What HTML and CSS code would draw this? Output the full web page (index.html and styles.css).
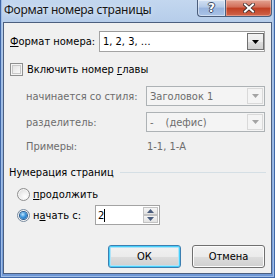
FILE: index.html
```html
<!DOCTYPE html>
<html lang="ru">
<head>
<meta charset="utf-8">
<title>Формат номера страницы</title>
<link rel="stylesheet" href="styles.css">
</head>
<body>
<div class="window">
  <div class="titlebar">
    <div class="title">Формат номера страницы</div>
    <div class="caption">
      <div class="cap-btn help"><span class="qmark">?</span></div>
      <div class="cap-btn close">
        <svg width="12" height="10" viewBox="0 0 12 10"><path d="M2 1.5 L10 8.5 M10 1.5 L2 8.5" stroke="#3b2a2a" stroke-width="3.6" stroke-linecap="square" fill="none"/><path d="M2 1.5 L10 8.5 M10 1.5 L2 8.5" stroke="#ffffff" stroke-width="2" stroke-linecap="square" fill="none"/></svg>
      </div>
    </div>
  </div>
  <div class="client">
    <div class="row row-format">
      <span class="lbl-format"><u>Ф</u>ормат номера:</span>
      <div class="combo combo-format">
        <span class="combo-text">1, 2, 3, …</span>
        <span class="drop drop-active"><svg width="7" height="4" viewBox="0 0 7 4"><path d="M0 0 H7 L3.5 4 Z" fill="#000"/></svg></span>
      </div>
    </div>
    <div class="row row-check">
      <span class="checkbox"></span>
      <span class="check-label">Включить номер <u>г</u>лавы</span>
    </div>
    <div class="row row-sub row-sub1">
      <span class="sub-label">начинается со стиля:</span>
      <div class="combo combo-dis">
        <span class="combo-text">Заголовок 1</span>
        <span class="drop drop-dis"><svg width="7" height="4" viewBox="0 0 7 4"><path d="M0 0 H7 L3.5 4 Z" fill="#a3a3a3"/></svg></span>
      </div>
    </div>
    <div class="row row-sub row-sub2">
      <span class="sub-label">разделитель:</span>
      <div class="combo combo-dis">
        <span class="combo-text">-<span class="dash-gap">(дефис)</span></span>
        <span class="drop drop-dis"><svg width="7" height="4" viewBox="0 0 7 4"><path d="M0 0 H7 L3.5 4 Z" fill="#a3a3a3"/></svg></span>
      </div>
    </div>
    <div class="row row-examples">
      <span class="sub-label">Примеры:</span>
      <span class="examples-value">1-1, 1-А</span>
    </div>
    <div class="row row-group">
      <span class="group-title">Нумерация страниц</span>
      <span class="group-line"></span>
    </div>
    <div class="row row-radio1">
      <span class="radio"></span>
      <span class="radio-label"><u>п</u>родолжить</span>
    </div>
    <div class="row row-radio2">
      <span class="radio radio-on"><span class="radio-dot"></span></span>
      <span class="radio-label radio-label-start">н<u>а</u>чать с:</span>
      <div class="spin">
        <span class="spin-text">2<span class="caret"></span></span>
        <span class="spin-btns">
          <span class="spin-btn"><svg width="7" height="4" viewBox="0 0 7 4"><path d="M0 4 H7 L3.5 0 Z" fill="#4a5d7e"/></svg></span>
          <span class="spin-btn"><svg width="7" height="4" viewBox="0 0 7 4"><path d="M0 0 H7 L3.5 4 Z" fill="#4a5d7e"/></svg></span>
        </span>
      </div>
    </div>
    <div class="row row-buttons">
      <div class="btn btn-default">ОК</div>
      <div class="btn">Отмена</div>
    </div>
  </div>
</div>
</body>
</html>
```
FILE: styles.css
```css
html, body {
  margin: 0;
  padding: 0;
}

body {
  width: 275px;
  height: 278px;
  overflow: hidden;
  font-family: "DejaVu Sans Condensed", "DejaVu Sans", sans-serif;
  font-size: 11px;
  color: #000;
}

.window {
  box-sizing: border-box;
  width: 275px;
  height: 278px;
  display: flex;
  flex-direction: column;
  padding: 0 3px 4px 3px;
  background: linear-gradient(to bottom, #c3d7ef 0px, #b6cdea 22px, #8fb0e0 60%, #6f98d6 100%);
  box-shadow: inset 1px 0 0 #3f67a8, inset -1px 0 0 #3f67a8, inset 0 -1px 0 #3f67a8, inset 2px 0 0 #9fbde6, inset -2px 0 0 #9fbde6, inset 0 -2px 0 #9fbde6;
}

.titlebar {
  height: 22px;
  display: flex;
  flex-shrink: 0;
}

.title {
  flex: 1;
  font-family: "Noto Sans", "Open Sans", sans-serif;
  font-size: 12px;
  letter-spacing: -0.25px;
  line-height: 20px;
  padding-left: 1px;
  color: #151515;
  text-shadow: 0 0 6px rgba(255, 255, 255, 0.8);
}

.caption {
  display: flex;
  height: 17px;
}

.cap-btn {
  box-sizing: border-box;
  height: 17px;
  border: 1px solid #4b5e7c;
  border-top: none;
  display: flex;
  align-items: center;
  justify-content: center;
}

.help {
  width: 28px;
  border-right: none;
  border-radius: 0 0 0 4px;
  background: linear-gradient(to bottom, #d3e1f3 0%, #b3c9e7 45%, #98b4de 50%, #a9c2e6 100%);
  box-shadow: inset 0 0 0 1px rgba(255, 255, 255, 0.45);
}

.qmark {
  font-family: "DejaVu Sans", sans-serif;
  font-weight: bold;
  font-size: 12px;
  line-height: 12px;
  color: #fff;
  text-shadow: 1px 0 0 #3a4a63, -1px 0 0 #3a4a63, 0 1px 0 #3a4a63, 0 -1px 0 #3a4a63;
}

.close {
  width: 47px;
  border-radius: 0 0 4px 0;
  background: linear-gradient(to bottom, #e3a393 0%, #d26d58 45%, #c03e22 50%, #d0654c 100%);
  box-shadow: inset 0 0 0 1px rgba(255, 220, 210, 0.4);
}

.close svg {
  display: block;
}

.client {
  flex: 1;
  background: #f0f0f0;
  border: 1px solid #4c5f7f;
  display: flex;
  flex-direction: column;
  padding-top: 8px;
}

.row {
  display: flex;
  align-items: center;
  flex-shrink: 0;
}

u {
  text-decoration: underline;
  text-underline-offset: 1px;
}

/* Format row */
.row-format {
  height: 21px;
}

.lbl-format {
  margin-left: 6px;
  width: 89px;
}

.combo {
  box-sizing: border-box;
  display: flex;
  align-items: center;
  height: 100%;
  border: 1px solid #a5a5a5;
  background: #fff;
}

.combo-format {
  width: 166px;
  border-color: #a3a3a3;
  border-top-color: #9b9b9b;
}

.combo-text {
  flex: 1;
  padding-left: 3px;
  white-space: nowrap;
}

.drop {
  box-sizing: border-box;
  width: 17px;
  align-self: stretch;
  display: flex;
  align-items: center;
  justify-content: center;
}

.drop-active {
  margin: 1px 0 1px 0;
  border: 1px solid #707070;
  background: linear-gradient(to bottom, #f2f2f2 0%, #ebebeb 50%, #dddddd 51%, #cfcfcf 100%);
}

.drop-dis {
  margin: 1px 1px 1px 0;
  width: 16px;
  border: 1px solid #d9d9d9;
  background: #f4f4f4;
}

/* Checkbox */
.row-check {
  margin-top: 11px;
  height: 13px;
}

.checkbox {
  box-sizing: border-box;
  width: 13px;
  height: 13px;
  margin-left: 6px;
  border: 1px solid #8e8f8f;
  background: linear-gradient(135deg, #dcdcdc 0%, #f2f2f2 60%, #ffffff 100%);
  box-shadow: inset 0 0 0 1px #f4f4f4, inset 0 0 0 2px #c8c8c8;
}

.check-label {
  margin-left: 4px;
}

/* Sub rows (disabled) */
.row-sub {
  height: 20px;
}

.row-sub1 {
  margin-top: 10px;
}

.row-sub2 {
  margin-top: 6px;
}

.sub-label {
  margin-left: 22px;
  width: 120px;
  color: #6d6d6d;
}

.combo-dis {
  width: 119px;
  border-color: #adb2b5;
  background: #f4f4f4;
  color: #6d6d6d;
}

.dash-gap {
  margin-left: 12px;
}

.row-examples {
  margin-top: 7px;
  height: 14px;
}

.examples-value {
  color: #6d6d6d;
  padding-left: 1px;
}

/* Group */
.row-group {
  margin-top: 12px;
  height: 14px;
}

.group-title {
  margin-left: 5px;
}

.group-line {
  flex: 1;
  height: 1px;
  background: #d5dfe5;
  margin-left: 6px;
  margin-right: 5px;
}

/* Radios */
.row-radio1 {
  margin-top: 8px;
  height: 14px;
}

.row-radio2 {
  margin-top: 4px;
  height: 20px;
}

.radio {
  box-sizing: border-box;
  width: 13px;
  height: 13px;
  margin-left: 13px;
  border-radius: 50%;
  border: 1px solid #8f8f8f;
  background: radial-gradient(circle at 65% 70%, #ffffff 0%, #f0f0f0 40%, #d4d4d4 100%);
  box-shadow: inset 0 0 0 1px #f6f6f6;
  display: flex;
  align-items: center;
  justify-content: center;
}

.radio-on {
  border-color: #7a8ca0;
}

.radio-dot {
  width: 7px;
  height: 7px;
  border-radius: 50%;
  background: radial-gradient(circle at 40% 35%, #bfe6ff 0%, #3b95dc 45%, #125aa6 100%);
  box-shadow: 0 0 0 1px #2c5f93;
}

.radio-label {
  margin-left: 3px;
}

.radio-label-start {
  width: 62px;
}

.spin {
  box-sizing: border-box;
  width: 65px;
  height: 20px;
  border: 1px solid #a3a3a3;
  background: #fff;
  display: flex;
  align-items: center;
}

.spin-text {
  flex: 1;
  padding-left: 2px;
  display: flex;
  align-items: center;
}

.caret {
  width: 1px;
  height: 13px;
  background: #000;
  margin-left: 0;
}

.spin-btns {
  display: flex;
  flex-direction: column;
  align-self: stretch;
  width: 15px;
  margin: 1px 1px 1px 0;
}

.spin-btn {
  box-sizing: border-box;
  flex: 1;
  border: 1px solid #c3c3c3;
  background: linear-gradient(to bottom, #f6f6f6, #e2e2e2);
  display: flex;
  align-items: center;
  justify-content: center;
}

.spin-btn svg {
  display: block;
}

/* Buttons */
.row-buttons {
  margin-top: 20px;
  height: 23px;
  justify-content: flex-end;
  padding-right: 6px;
  gap: 11px;
}

.btn {
  box-sizing: border-box;
  width: 73px;
  height: 23px;
  border: 1px solid #707070;
  border-radius: 3px;
  background: linear-gradient(to bottom, #f2f2f2 0%, #ebebeb 50%, #dddddd 51%, #cfcfcf 100%);
  box-shadow: inset 0 0 0 1px #fcfcfc;
  display: flex;
  align-items: center;
  justify-content: center;
}

.btn-default {
  border-color: #3c7fb1;
  box-shadow: inset 0 0 0 1px #48d0fb, inset 0 0 0 2px #b1e3f7;
}
```
